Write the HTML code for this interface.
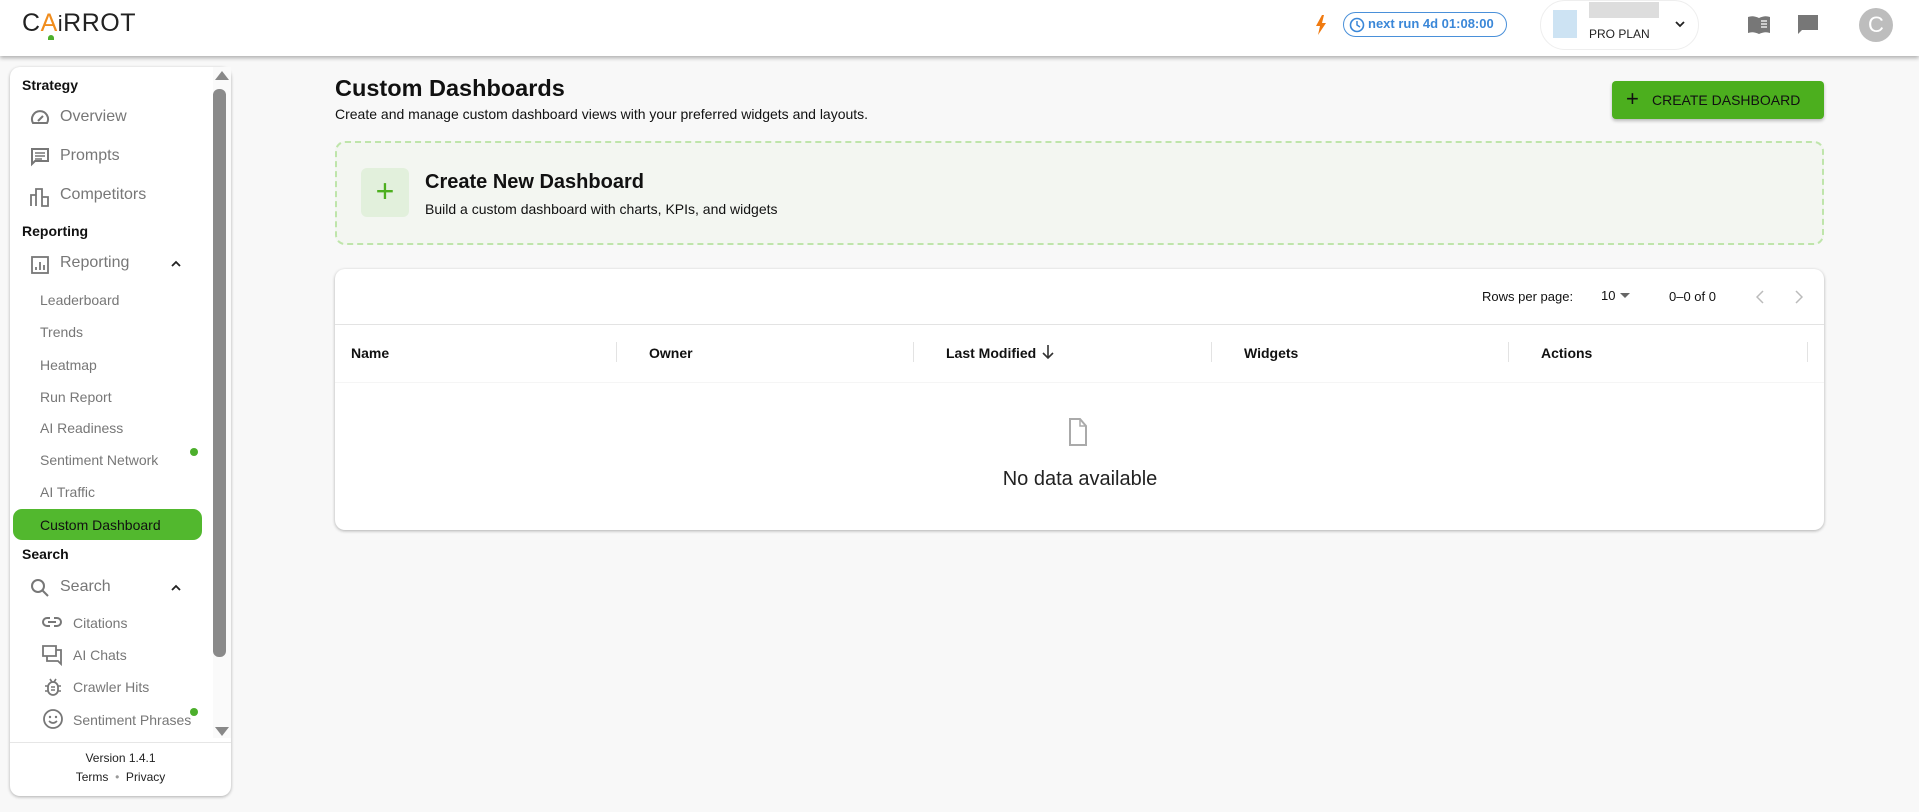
<!DOCTYPE html>
<html><head><style>
*{box-sizing:border-box;margin:0;padding:0}
body{width:1919px;height:812px;background:#f8f8f8;font-family:"Liberation Sans",Arial,sans-serif;position:relative;overflow:hidden;color:#111}
.a{position:absolute}
.hdr{left:0;top:0;width:1919px;height:56px;background:#fff;box-shadow:0 2px 4px rgba(0,0,0,.3);z-index:2}
.side{left:10px;top:67px;width:221px;height:729px;background:#fff;border-radius:10px;box-shadow:0 1px 3px rgba(0,0,0,.3)}
.lbl{font-weight:bold;font-size:14px;left:12px}
.it{font-size:16px;color:#777;left:50px}
.sub{font-size:14px;color:#777;left:30px}
.ico{left:20px}
.th{font-weight:bold;font-size:14px;top:345px}
.sep{width:1px;height:20px;background:#e3e3e3;top:342px}
</style></head><body>
<div class="a hdr">
 <div class="a" style="left:22px;top:9px;font-size:25px;letter-spacing:0.5px;color:#222">C<span style="color:#f08c1c">A</span><span style="font-size:22px">i</span>RROT</div>
 <div class="a" style="left:48px;top:35px;width:6px;height:5px;background:#4caf2c;border-radius:3px 3px 0 0"></div>
 <svg class="a" style="left:1315px;top:15px" width="12" height="20" viewBox="0 0 12 20"><path d="M7 0L1 11h4l-2 9 8-12H7l2-8z" fill="#f07a10"/></svg>
 <div class="a" style="left:1343px;top:12px;width:164px;height:25px;border:1.5px solid #4a90d9;border-radius:13px;color:#3a87d8;font-weight:bold;font-size:13px;line-height:22px;padding-left:24px">next run 4d 01:08:00</div>
 <svg class="a" style="left:1349px;top:17px" width="16" height="16" viewBox="0 0 16 16"><circle cx="8" cy="8" r="6.5" fill="none" stroke="#3a87d8" stroke-width="1.6"/><path d="M8 4v4l3 2" fill="none" stroke="#3a87d8" stroke-width="1.5"/></svg>
 <div class="a" style="left:1540px;top:0;width:159px;height:50px;border:1px solid #eee;border-radius:25px"></div>
 <div class="a" style="left:1553px;top:10px;width:24px;height:28px;background:#cde3f3"></div>
 <div class="a" style="left:1589px;top:2px;width:70px;height:16px;background:#ddd"></div>
 <div class="a" style="left:1589px;top:27px;font-size:12px;color:#222">PRO PLAN</div>
 <svg class="a" style="left:1674px;top:20px" width="12" height="8" viewBox="0 0 12 8"><path d="M2 2l4 4 4-4" fill="none" stroke="#222" stroke-width="1.8"/></svg>
 <svg class="a" style="left:1747px;top:14px" width="24" height="22" viewBox="0 0 24 22"><path d="M1 3q5-2 11 1q6-3 11-1v16q-5-2-11 1q-6-3-11-1z" fill="#777"/><path d="M14 7h6M14 10h6M14 13h6" stroke="#fff" stroke-width="1.2"/></svg>
 <svg class="a" style="left:1797px;top:14px" width="22" height="22" viewBox="0 0 22 22"><path d="M1 1h20v15H5l-4 4z" fill="#777"/></svg>
 <div class="a" style="left:1859px;top:8px;width:34px;height:34px;border-radius:50%;background:#bdbdbd;color:#fff;font-size:22px;text-align:center;line-height:34px">C</div>
</div>

<div class="a side">
 <div class="a" style="left:203px;top:0;width:18px;height:671px;background:#fafafa"></div>
 <svg class="a" style="left:205px;top:3px" width="14" height="10"><path d="M0 10L7 1l7 9z" fill="#888"/></svg>
 <div class="a" style="left:203px;top:22px;width:13px;height:568px;background:#8a8a8a;border-radius:6px"></div>
 <svg class="a" style="left:205px;top:660px" width="14" height="10"><path d="M0 0h14L7 9z" fill="#888"/></svg>
 <div class="a lbl" style="top:10px">Strategy</div>
 <svg class="a ico" style="top:41px" width="20" height="18" viewBox="0 0 20 18"><path d="M3 15a8 8 0 1 1 14 0z" fill="none" stroke="#777" stroke-width="2"/><path d="M8 13l5-5" stroke="#777" stroke-width="2"/></svg>
 <div class="a it" style="top:41px">Overview</div>
 <svg class="a ico" style="top:80px" width="20" height="20" viewBox="0 0 20 20"><path d="M2 2h16v12H5l-3 3z" fill="none" stroke="#777" stroke-width="2"/><path d="M5 6h10M5 9h10M5 12h7" stroke="#777" stroke-width="1.5"/></svg>
 <div class="a it" style="top:80px">Prompts</div>
 <svg class="a ico" style="top:120px" width="20" height="20" viewBox="0 0 20 20"><path d="M1 19V8h5v11M6 19V2h6v17M12 19V10h6v9z" fill="none" stroke="#777" stroke-width="1.8"/></svg>
 <div class="a it" style="top:119px">Competitors</div>
 <div class="a lbl" style="top:156px">Reporting</div>
 <svg class="a ico" style="top:188px" width="20" height="20" viewBox="0 0 20 20"><rect x="2" y="2" width="16" height="16" fill="none" stroke="#777" stroke-width="1.8"/><path d="M6 15v-3M10 15V7M14 15v-5" stroke="#777" stroke-width="1.8"/></svg>
 <div class="a it" style="top:187px">Reporting</div>
 <svg class="a" style="left:160px;top:193px" width="12" height="8"><path d="M2 6l4-4 4 4" fill="none" stroke="#222" stroke-width="1.8"/></svg>
 <div class="a sub" style="top:225px">Leaderboard</div>
 <div class="a sub" style="top:257px">Trends</div>
 <div class="a sub" style="top:290px">Heatmap</div>
 <div class="a sub" style="top:322px">Run Report</div>
 <div class="a sub" style="top:353px">AI Readiness</div>
 <div class="a sub" style="top:385px">Sentiment Network</div>
 <div class="a" style="left:180px;top:381px;width:8px;height:8px;border-radius:50%;background:#4caf2c"></div>
 <div class="a sub" style="top:417px">AI Traffic</div>
 <div class="a" style="left:3px;top:442px;width:189px;height:31px;background:#52b82e;border-radius:9px"></div>
 <div class="a sub" style="top:450px;color:#111">Custom Dashboard</div>
 <div class="a lbl" style="top:479px">Search</div>
 <svg class="a ico" style="top:511px" width="20" height="20" viewBox="0 0 20 20"><circle cx="8" cy="8" r="6" fill="none" stroke="#777" stroke-width="2"/><path d="M12.5 12.5L18 18" stroke="#777" stroke-width="2"/></svg>
 <div class="a it" style="top:511px">Search</div>
 <svg class="a" style="left:160px;top:517px" width="12" height="8"><path d="M2 6l4-4 4 4" fill="none" stroke="#222" stroke-width="1.8"/></svg>
 <svg class="a" style="left:32px;top:549px" width="20" height="12" viewBox="0 0 20 12"><path d="M8 2H5a4 4 0 0 0 0 8h3M12 2h3a4 4 0 0 1 0 8h-3M6 6h8" fill="none" stroke="#777" stroke-width="2"/></svg>
 <div class="a sub" style="left:63px;top:548px">Citations</div>
 <svg class="a" style="left:32px;top:578px" width="20" height="22" viewBox="0 0 20 22"><path d="M1 1h13v10H1zM5 11v5h11l3 3V5h-5" fill="none" stroke="#777" stroke-width="1.8"/></svg>
 <div class="a sub" style="left:63px;top:580px">AI Chats</div>
 <svg class="a" style="left:34px;top:610px" width="18" height="20" viewBox="0 0 18 20"><rect x="4" y="5" width="10" height="13" rx="5" fill="none" stroke="#777" stroke-width="1.8"/><path d="M1 9h3M14 9h3M1 14h3M14 14h3M6 2l2 3M12 2l-2 3M7 10h4M7 13h4" stroke="#777" stroke-width="1.6"/></svg>
 <div class="a sub" style="left:63px;top:612px">Crawler Hits</div>
 <svg class="a" style="left:32px;top:641px" width="22" height="22" viewBox="0 0 22 22"><circle cx="11" cy="11" r="9" fill="none" stroke="#777" stroke-width="1.8"/><circle cx="8" cy="9" r="1.2" fill="#777"/><circle cx="14" cy="9" r="1.2" fill="#777"/><path d="M7 13q4 4 8 0" fill="none" stroke="#777" stroke-width="1.6"/></svg>
 <div class="a sub" style="left:63px;top:645px">Sentiment Phrases</div>
 <div class="a" style="left:180px;top:641px;width:8px;height:8px;border-radius:50%;background:#4caf2c"></div>
 <div class="a" style="left:0;top:675px;width:221px;height:1px;background:#e6e6e6"></div>
 <div class="a" style="left:0;top:684px;width:221px;text-align:center;font-size:12px;color:#222">Version 1.4.1</div>
 <div class="a" style="left:0;top:703px;width:221px;text-align:center;font-size:12px;color:#222">Terms &nbsp;<span style="color:#999">•</span>&nbsp; Privacy</div>
</div>

<div class="a" style="left:335px;top:75px;font-size:23.5px;font-weight:bold">Custom Dashboards</div>
<div class="a" style="left:335px;top:106px;font-size:14px">Create and manage custom dashboard views with your preferred widgets and layouts.</div>
<div class="a" style="left:1612px;top:81px;width:212px;height:38px;background:#4caf1e;border-radius:4px;box-shadow:0 2px 3px rgba(0,0,0,.25);font-size:14px;line-height:38px;padding-left:40px;color:#111">CREATE DASHBOARD</div>
<div class="a" style="left:1626px;top:89px;font-size:22px;line-height:20px">+</div>

<div class="a" style="left:335px;top:141px;width:1489px;height:104px;border:2px dashed #bfe5ab;border-radius:10px;background:#f3f6f1"></div>
<div class="a" style="left:361px;top:168px;width:48px;height:49px;background:#e2f0dc;border-radius:6px;color:#4caf1e;font-size:32px;text-align:center;line-height:46px">+</div>
<div class="a" style="left:425px;top:171px;font-size:20px;font-weight:bold">Create New Dashboard</div>
<div class="a" style="left:425px;top:201px;font-size:14px">Build a custom dashboard with charts, KPIs, and widgets</div>

<div class="a" style="left:335px;top:269px;width:1489px;height:261px;background:#fff;border-radius:10px;box-shadow:0 1px 3px rgba(0,0,0,.3)">
 <div class="a" style="left:0;top:55px;width:1489px;height:1px;background:#e3e3e3"></div>
 <div class="a" style="left:0;top:113px;width:1489px;height:1px;background:#f5f5f5"></div>
</div>
<div class="a" style="left:1482px;top:289px;font-size:13px">Rows per page:</div>
<div class="a" style="left:1601px;top:288px;font-size:13px">10</div>
<svg class="a" style="left:1620px;top:293px" width="10" height="6"><path d="M0 0h10L5 5z" fill="#666"/></svg>
<div class="a" style="left:1669px;top:289px;font-size:13px">0–0 of 0</div>
<svg class="a" style="left:1756px;top:290px" width="8" height="14"><path d="M7 1L1 7l6 6" fill="none" stroke="#bbb" stroke-width="1.5"/></svg>
<svg class="a" style="left:1795px;top:290px" width="8" height="14"><path d="M1 1l6 6-6 6" fill="none" stroke="#bbb" stroke-width="1.5"/></svg>
<div class="a th" style="left:351px">Name</div>
<div class="a th" style="left:649px">Owner</div>
<div class="a th" style="left:946px">Last Modified</div>
<svg class="a" style="left:1042px;top:344px" width="12" height="16"><path d="M6 1v13M1 9l5 5 5-5" fill="none" stroke="#333" stroke-width="1.6"/></svg>
<div class="a th" style="left:1244px">Widgets</div>
<div class="a th" style="left:1541px">Actions</div>
<div class="a sep" style="left:616px"></div><div class="a sep" style="left:913px"></div><div class="a sep" style="left:1211px"></div><div class="a sep" style="left:1508px"></div><div class="a sep" style="left:1807px"></div>
<svg class="a" style="left:1069px;top:418px" width="18" height="28" viewBox="0 0 18 28"><path d="M1 1h10l6 7v19H1z" fill="none" stroke="#aaa" stroke-width="2"/><path d="M11 1v7h6" fill="none" stroke="#aaa" stroke-width="1.5"/></svg>
<div class="a" style="left:935px;top:468px;width:290px;text-align:center;font-size:20px;color:#222">No data available</div>
</body></html>
